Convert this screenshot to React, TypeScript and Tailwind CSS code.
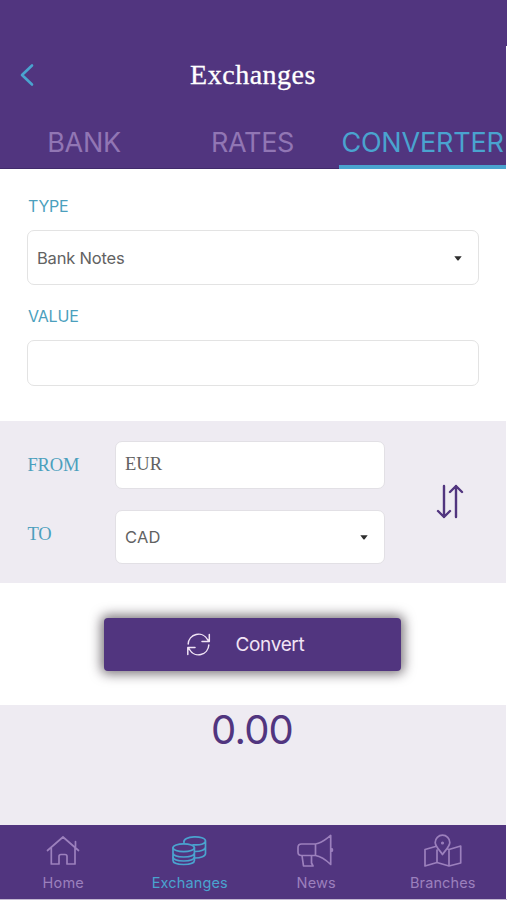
import type { ReactNode } from "react";

const sans = "font-['Inter','Liberation_Sans',sans-serif]";
const serif = "font-['Liberation_Serif',serif]";

function Tab({ label, className, active = false }: { label: string; className: string; active?: boolean }) {
  return (
    <button
      className={`flex h-12 items-center justify-center border-b-4 text-[27px] leading-none ${className} ${
        active ? "border-[#4aa3cf] text-[#4aa3cf]" : "border-transparent text-[#9176b4]"
      }`}
    >
      {label}
    </button>
  );
}

function Caret() {
  return (
    <svg width="8" height="5" viewBox="0 0 8 5" fill="#2e2e2e">
      <path d="M0.3 0.2H7.7L4.7 4.2Q4 4.9 3.3 4.2Z" />
    </svg>
  );
}

function NavItem({ label, active = false, className, children }: { label: string; active?: boolean; className: string; children: ReactNode }) {
  return (
    <button className={`flex w-[126.5px] flex-col items-center pt-[7px] ${active ? "text-[#4aa3cf]" : "text-[#9c80bd]"}`}>
      <svg width="40" height="38" viewBox="0 0 40 38" fill="none" stroke="currentColor" strokeWidth="1.7" strokeLinecap="round" strokeLinejoin="round">
        {children}
      </svg>
      <span className={`mt-[4px] text-[14.5px] leading-[18px] ${className}`}>{label}</span>
    </button>
  );
}

export default function App() {
  return (
    <div className={`h-[900px] w-[507px] overflow-hidden bg-white ${sans}`}>
      <div className="h-[46px] bg-[#51357f]" />
      <div className="flex h-[853px] w-[506px] flex-col">
        <header className="h-[123px] shrink-0 border-b border-[#412a6b] bg-[#51357f]">
          <div className="grid h-[74px] grid-cols-[60px_1fr_60px] items-start">
            <button className="pl-5 pt-[17px]">
              <svg width="15" height="24" viewBox="0 0 15 24" fill="none" stroke="#4aa3cf" strokeWidth="2.6" strokeLinecap="round" strokeLinejoin="round">
                <path d="M12 2.5L2 12L12 21.5" />
              </svg>
            </button>
            <h1 className={`pt-[13px] text-center text-[28px] leading-[32px] tracking-[0.5px] text-white [-webkit-text-stroke:0.3px_white] ${serif}`}>Exchanges</h1>
          </div>
          <div className="grid h-[49px] grid-cols-[168px_169px_169px]">
            <Tab label="BANK" className="tracking-[-0.3px]" />
            <Tab label="RATES" className="tracking-[-0.3px]" />
            <Tab label="CONVERTER" active className="ml-[2px] h-[49px] tracking-[-0.2px]" />
          </div>
        </header>

        <section className="flex h-[252px] shrink-0 flex-col px-[27px] pt-[27px]">
          <label className="h-[34px] pl-[1px] text-[16px] leading-5 tracking-[-0.2px] text-[#4b9fbd]">TYPE</label>
          <button className="flex h-[55px] items-center justify-between rounded-[7px] border-[1.5px] border-[#e3e3e3] pl-[9px] pr-[16px] pt-[1px] text-[16.5px] tracking-[-0.2px] text-[#626262]">
            <span>Bank Notes</span>
            <Caret />
          </button>
          <label className="mt-[21px] h-[34px] pl-[1px] text-[16px] leading-5 tracking-[-0.2px] text-[#4b9fbd]">VALUE</label>
          <input className="h-[46px] rounded-[7px] border-[1.5px] border-[#e3e3e3] outline-none" />
        </section>

        <section className="flex h-[162px] shrink-0 bg-[#eeebf2]">
          <div className={`flex w-[115px] flex-col pl-[27.5px] pt-[34px] text-[18.5px] leading-5 tracking-[-0.2px] text-[#4b9fbd] ${serif}`}>
            <span className="h-[69px]">FROM</span>
            <span>TO</span>
          </div>
          <div className="flex w-[270px] flex-col gap-[21px] pt-5">
            <div className={`flex h-[48px] items-center rounded-[7px] border border-[#e2e0e5] bg-white pl-[9px] text-[18.5px] text-[#626262] ${serif}`}>EUR</div>
            <button className="flex h-[54px] items-center justify-between rounded-[7px] border border-[#e2e0e5] bg-white pl-[9px] pr-[16px] text-[16.5px] tracking-[0.2px] text-[#626262]">
              <span>CAD</span>
              <Caret />
            </button>
          </div>
          <button className="flex flex-1 items-center justify-center pl-[8px]">
            <svg width="28" height="36" viewBox="0 0 28 36" fill="none" stroke="#51357f" strokeWidth="2.4" strokeLinecap="round" strokeLinejoin="round">
              <path d="M8 2V33M2 27L8 33L14 27M20 33V2M14 8L20 2L26 8" />
            </svg>
          </button>
        </section>

        <section className="flex h-[122px] shrink-0 items-center justify-center">
          <button className="mr-[1px] flex h-[53px] w-[297px] items-center rounded-[4px] bg-[#51357f] pl-[82px] text-[19px] text-[#f1e4f5] shadow-[0_0_12px_3px_rgba(35,25,35,0.6)]">
            <svg width="25" height="25" viewBox="0 0 25 25" fill="none" stroke="currentColor" strokeWidth="1.5" strokeLinecap="round" strokeLinejoin="round">
              <path d="M2.200 12A10.300 10.300 0 0 1 21.500 7.500L23.300 9.500M23.300 2.500V9.500H16M22.800 13A10.300 10.300 0 0 1 3.500 17.500L1.800 15.500M1.800 22.500V15.500H9" />
            </svg>
            <span className="ml-[24.5px] pt-[2px] tracking-[-0.35px]">Convert</span>
          </button>
        </section>

        <section className="h-[120px] shrink-0 bg-[#eeebf2] pr-[2px] text-center text-[40px] leading-[50px] tracking-[-0.8px] text-[#51357f]">0.00</section>

        <nav className="flex h-[74px] shrink-0 bg-[#51357f]">
          <NavItem label="Home" className="tracking-[0.2px]">
            <path d="M4.500 18.500L20 5L35.500 18.500M8.300 16V32H16V24.500Q16 22.500 18 22.500H22Q24 22.500 24 24.500V32H32V16M32.500 14.500V9.500" />
          </NavItem>
          <NavItem label="Exchanges" active className="tracking-[0.15px]">
            <ellipse cx="13.700" cy="15.800" rx="10.700" ry="3.900" />
            <path d="M3 15.800V28.500C3 33.800 24.400 33.800 24.400 28.500V15.800M3 21C3 26.300 24.400 26.300 24.400 21" />
            <path d="M3 25C3 30.300 24.400 30.300 24.400 25" />
            <path d="M14 10.500C12 3.500 35.500 3 35.500 9V21.500C35.500 24 31 26 25 26M35.500 9C35.500 11.800 30 13.500 23 12.800M35.500 15C35.500 17.500 31 19.500 25 19.500" />
          </NavItem>
          <NavItem label="News" className="tracking-[0.2px]">
            <path d="M19.500 12H5.500Q2 12 2 15.500V20Q2 23.500 5.500 23.500H19.500ZM19.500 12C26 11 30 7 34.700 3.500V32.500C30 28 26 24.500 19.500 23.500M35 16.500Q36.500 16.500 36.500 18Q36.500 19.500 35 19.500M6 23.500L7.500 34H17L15.500 31V24" />
          </NavItem>
          <NavItem label="Branches" className="tracking-[0.1px]">
            <path d="M12.500 14.500L2 17.500V34L14 30.500L26 34L37.700 31V14L26 17.500L24.500 17M14 18V30.500M26 17.500V34M19.500 22.500C17 18.500 12.200 14.500 12.200 10.500A7.300 7.300 0 0 1 26.800 10.500C26.800 14.500 22 18.500 19.500 22.500Z" />
            <circle cx="19.500" cy="11" r="0.700" />
          </NavItem>
        </nav>
      </div>
      <div className="h-px bg-[#c4b9d2]" />
    </div>
  );
}
